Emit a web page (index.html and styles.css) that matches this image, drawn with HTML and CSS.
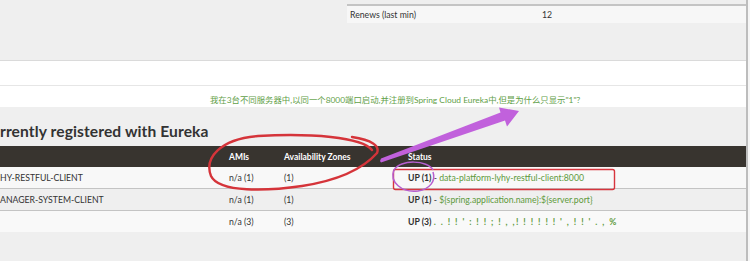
FILE: index.html
```html
<!DOCTYPE html>
<html lang="zh">
<head>
<meta charset="utf-8">
<title>Eureka</title>
<link rel="stylesheet" href="styles.css">
</head>
<body>
<div class="screen">
  <div class="page">
    <section class="top">
      <div class="mini-table">
        <div class="mini-row">
          <span class="mini-key">Renews (last min)</span>
          <span class="mini-val">12</span>
        </div>
      </div>
    </section>
    <div class="band band-a"></div>
    <div class="band band-b">
      <p class="question">我在3台不同服务器中,以同一个8000端口启动,并注册到Spring Cloud Eureka中,但是为什么只显示"1"?</p>
    </div>
    <h2 class="title">rrently registered with Eureka</h2>
    <div class="grid">
      <div class="row head">
        <span></span><span>AMIs</span><span>Availability Zones</span><span>Status</span>
      </div>
      <div class="row r1">
        <span>HY-RESTFUL-CLIENT</span><span>n/a (1)</span><span>(1)</span>
        <span><b>UP (1)</b> - <em>data-platform-lyhy-restful-client:8000</em></span>
      </div>
      <div class="row r2">
        <span>ANAGER-SYSTEM-CLIENT</span><span>n/a (1)</span><span>(1)</span>
        <span><b>UP (1)</b> - <em>${spring.application.name}:${server.port}</em></span>
      </div>
      <div class="row r3">
        <span></span><span>n/a (3)</span><span>(3)</span>
        <span><b>UP (3)</b> <em class="blur">. . ! ! ' :  ! ! ;   ! , ,!    ! ! !   ! ! ' , ! ! '   .    ,    %</em></span>
      </div>
    </div>
  </div>
  <div class="scrollbar"></div>

  <svg class="marks" width="750" height="261" viewBox="0 0 750 261">
    <path class="red" d="M 372 150 C 362 137, 310 133, 258 136 C 220 139, 204 158, 211 176 C 219 193, 268 191, 302 186 C 334 181, 362 170, 377 153 C 380 146, 372 140, 352 137"/>
    <rect class="redbox" x="393.5" y="169.5" width="221" height="20" rx="2"/>
    <path class="purple-ring" d="M 433 170 C 428 160, 400 159, 394 170 C 389 182, 402 193, 418 191 C 430 189, 436 181, 433 172"/>
    <polygon class="arrow" points="380,161 381,158.5 500.5,112.5 499,107.5 519,111 507,126.5 505,120.5 381,162.5"/>
  </svg>
</div>
</body>
</html>
```

FILE: styles.css
```css
* { box-sizing: border-box; }

html, body {
  margin: 0;
  padding: 0;
}

body {
  width: 750px;
  height: 261px;
  overflow: hidden;
  background: #efefef;
  font-family: Lato, "Noto Sans CJK SC", sans-serif;
  font-size: 8.7px;
  color: #333;
}

.screen {
  position: relative;
  display: flex;
  width: 750px;
  height: 261px;
}

.page {
  width: 746px;
  flex: none;
  background: #efefef;
}

.scrollbar {
  width: 4px;
  flex: none;
  border-left: 2px solid #bdbdbd;
  background: #f6f6f6;
}

.top {
  height: 60px;
  padding-top: 4px;
}

.mini-table {
  margin-left: 347px;
  border-top: 2px solid #c4c4c4;
}

.mini-row {
  display: flex;
  align-items: center;
  height: 17px;
  background: #f7f7f7;
  padding-left: 3px;
}

.mini-key { width: 192px; }

.band {
  background: #fff;
}

.band-a {
  height: 25px;
  border-top: 1px solid #dadada;
}

.band-b {
  height: 22px;
  border-top: 1px solid #e6e6e6;
  display: flex;
  align-items: flex-end;
}

.question {
  margin: 0 0 1px 210px;
  color: #5fa048;
  font-size: 8.4px;
  line-height: 12px;
  white-space: nowrap;
}

.title {
  margin: 0;
  height: 39px;
  padding-top: 14px;
  font-family: Lato, sans-serif;
  font-weight: 700;
  font-size: 15.6px;
  line-height: 20px;
  color: #333;
  letter-spacing: 0.1px;
  white-space: nowrap;
}

.grid {
  display: flex;
  flex-direction: column;
}

.row {
  display: grid;
  grid-template-columns: 229px 55px 124px 1fr;
  align-items: center;
  white-space: nowrap;
}

.head {
  height: 21px;
  background: #38342f;
  color: #fff;
  font-weight: 700;
  font-size: 8.5px;
}

.r1, .r2, .r3 {
  height: 22px;
  color: #333;
}

.r1 { background: #f8f8f8; border-bottom: 1px solid #c4c4c4; }
.r2 { background: #efefef; border-bottom: 1px solid #c4c4c4; }
.r3 { background: #f9f9f9; height: 21px; }

.row b { font-weight: 700; color: #2f2f2f; }
.row em { font-style: normal; color: #5e9a3c; }

.blur {
  letter-spacing: 1.4px;
  font-weight: 700;
  color: #7da860;
}

.marks {
  position: absolute;
  left: 0;
  top: 0;
  pointer-events: none;
}

.red {
  fill: none;
  stroke: #d5343a;
  stroke-width: 2.4;
  stroke-linecap: round;
}

.redbox {
  fill: none;
  stroke: #d8353e;
  stroke-width: 1.4;
}

.purple-ring {
  fill: none;
  stroke: #b65fd0;
  stroke-width: 1.5;
}

.arrow {
  fill: #c161dc;
}
```
